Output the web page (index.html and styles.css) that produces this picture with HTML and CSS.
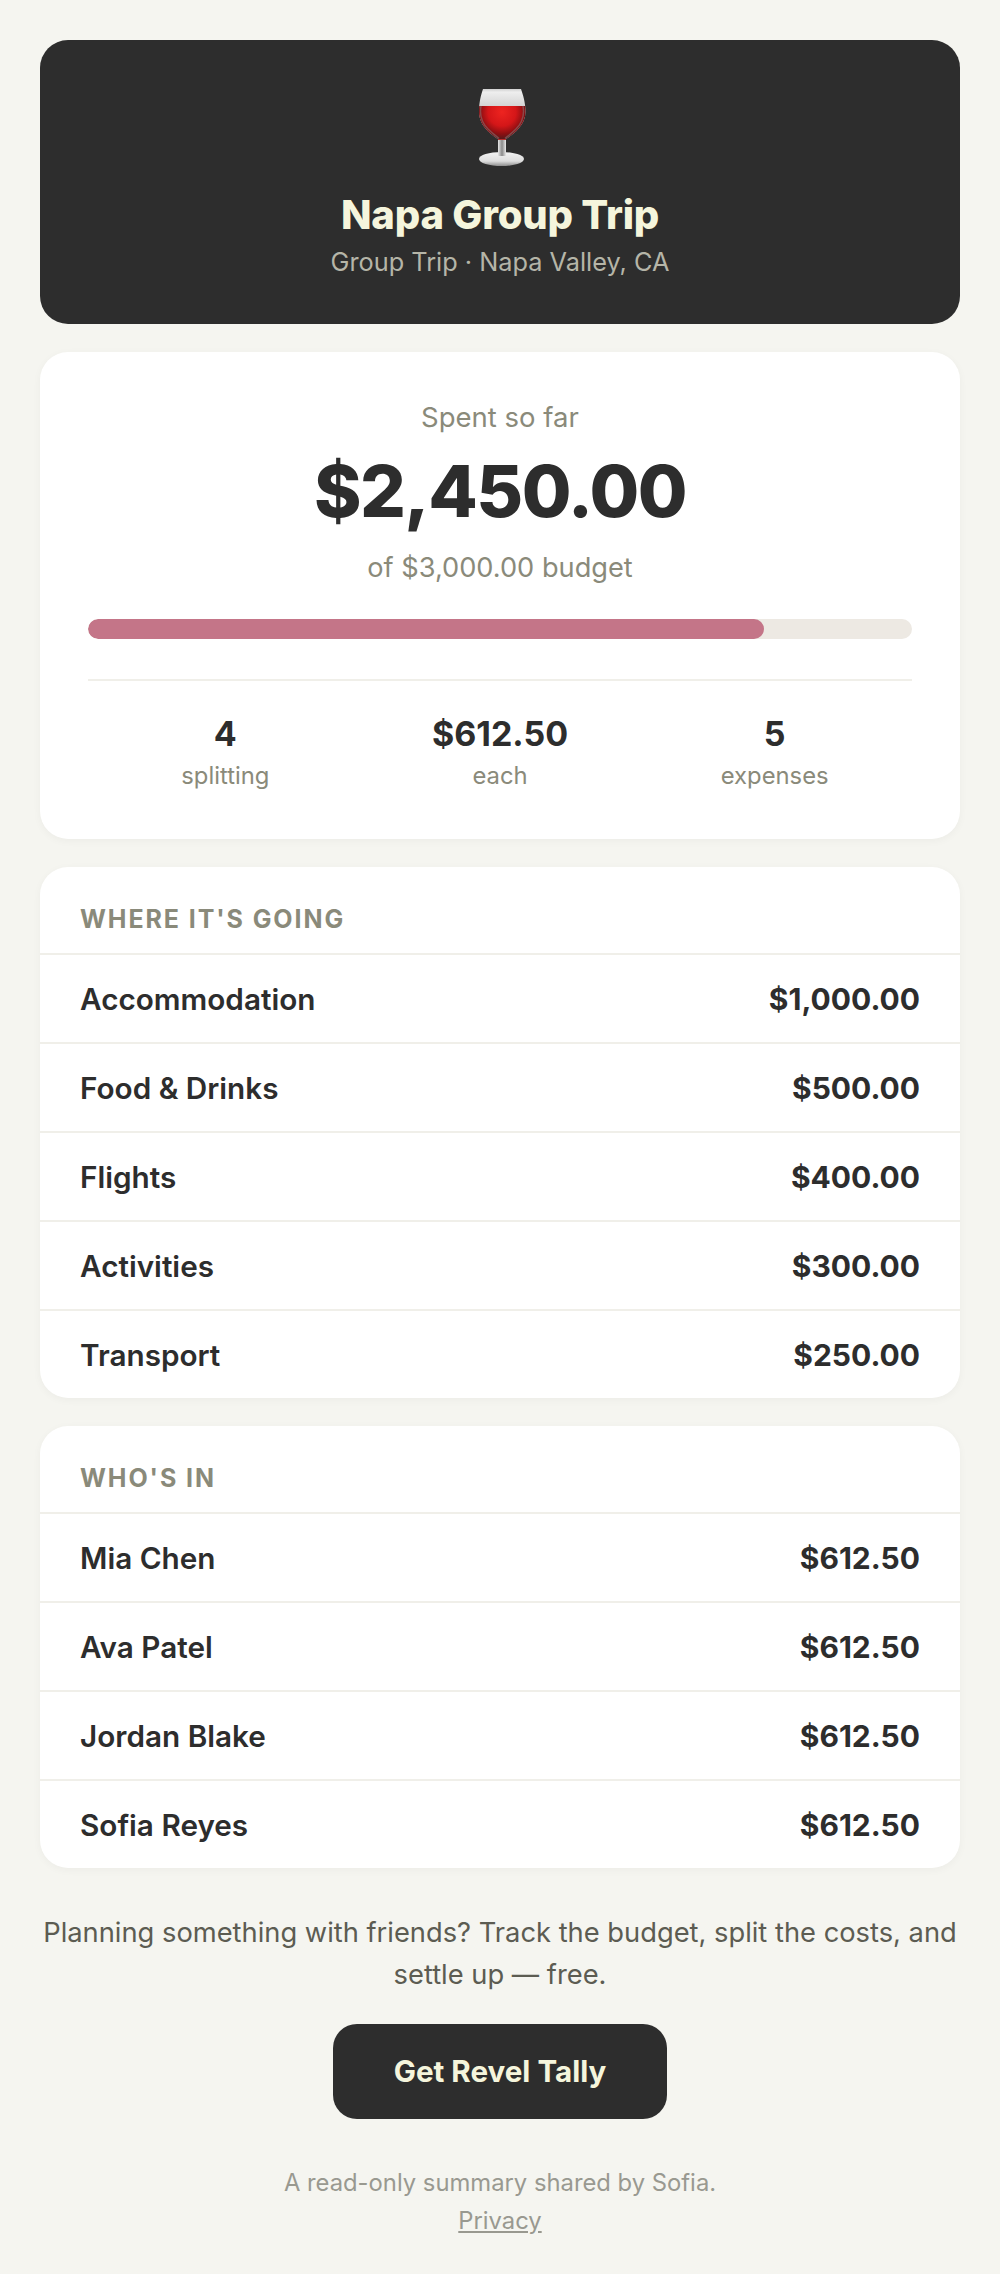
FILE: index.html
```html
<!DOCTYPE html>
<html>
    <head>
        <title>Napa Group Trip</title>
        <link rel="stylesheet" href="styles.css">
    </head>
    <body>
        <header class="hero">
            <svg class="glass" viewBox="0 0 48 80" width="48" height="80">
                <defs>
                    <radialGradient id="wine" gradientUnits="userSpaceOnUse" cx="24" cy="24" r="28">
                        <stop offset="0" stop-color="#ee2420"/>
                        <stop offset="0.5" stop-color="#d41618"/>
                        <stop offset="0.78" stop-color="#8c0f12"/>
                        <stop offset="1" stop-color="#4d1a1c"/>
                    </radialGradient>
                    <linearGradient id="bowl" x1="0" y1="0" x2="0" y2="1">
                        <stop offset="0" stop-color="#c8c8c8"/>
                        <stop offset="0.08" stop-color="#eeeeee"/>
                        <stop offset="0.35" stop-color="#d4d4d4"/>
                    </linearGradient>
                    <linearGradient id="stem" x1="0" y1="0" x2="1" y2="0">
                        <stop offset="0" stop-color="#e6e6e6"/>
                        <stop offset="0.5" stop-color="#8a8a8a"/>
                        <stop offset="1" stop-color="#e8e8e8"/>
                    </linearGradient>
                    <linearGradient id="foot" x1="0" y1="0" x2="0" y2="1">
                        <stop offset="0" stop-color="#f2f2f2"/>
                        <stop offset="0.65" stop-color="#dddddd"/>
                        <stop offset="1" stop-color="#8e8e8e"/>
                    </linearGradient>
                    <clipPath id="bowl-shape">
                        <path d="M5 1H43C45 7 47.5 14 47.5 24C47.5 38 34 47 28 51H20C14 47 1 38 1 24C1 14 3 7 5 1Z"/>
                    </clipPath>
                </defs>
                <ellipse cx="23.5" cy="71" rx="22.5" ry="7" fill="url(#foot)"/>
                <rect x="20" y="50" width="8" height="18" fill="url(#stem)"/>
                <rect x="20" y="50" width="8" height="2" fill="#b5302f"/>
                <g clip-path="url(#bowl-shape)">
                    <rect width="48" height="52" fill="url(#bowl)"/>
                    <rect y="18" width="48" height="34" fill="url(#wine)"/>
                </g>
                <path d="M3 18C1.5 26 3 34 10 41C14 45 18 48 21 50.5M45 18C46.5 26 45 34 38 41C34 45 30 48 27 50.5" fill="none" stroke="#8a7676" stroke-opacity="0.55" stroke-width="1.5"/>
            </svg>
            <h1>Napa Group Trip</h1>
            <p class="hero-sub">Group Trip · Napa Valley, CA</p>
        </header>

        <section class="card summary">
            <p class="spent-label">Spent so far</p>
            <p class="spent">$2,450.00</p>
            <p class="budget">of $3,000.00 budget</p>
            <div class="bar"><div class="bar-fill" style="width: 82%"></div></div>
            <div class="stats">
                <div class="stat"><strong>4</strong><span>splitting</span></div>
                <div class="stat"><strong>$612.50</strong><span>each</span></div>
                <div class="stat"><strong>5</strong><span>expenses</span></div>
            </div>
        </section>

        <section class="card">
            <h2>Where it's going</h2>
            <div class="row"><span>Accommodation</span><strong>$1,000.00</strong></div>
            <div class="row"><span>Food &amp; Drinks</span><strong>$500.00</strong></div>
            <div class="row"><span>Flights</span><strong>$400.00</strong></div>
            <div class="row"><span>Activities</span><strong>$300.00</strong></div>
            <div class="row"><span>Transport</span><strong>$250.00</strong></div>
        </section>

        <section class="card">
            <h2>Who's in</h2>
            <div class="row"><span>Mia Chen</span><strong>$612.50</strong></div>
            <div class="row"><span>Ava Patel</span><strong>$612.50</strong></div>
            <div class="row"><span>Jordan Blake</span><strong>$612.50</strong></div>
            <div class="row"><span>Sofia Reyes</span><strong>$612.50</strong></div>
        </section>

        <footer class="cta">
            <p class="pitch">Planning something with friends? Track the budget, split the costs, and settle up — free.</p>
            <a class="button" href="#">Get Revel Tally</a>
            <p class="note">A read-only summary shared by Sofia.<br><a href="#">Privacy</a></p>
        </footer>
    </body>
</html>
```

FILE: styles.css
```css
* {
    box-sizing: border-box;
}

body {
    margin: 0;
    padding: 40px;
    background: #f5f5f0;
    color: #2d2d2d;
    font-family: Inter, "Liberation Sans", sans-serif;
}

h1, h2, p {
    margin: 0;
}

.hero {
    display: flex;
    flex-direction: column;
    align-items: center;
    height: 284px;
    padding-top: 48px;
    background: #2d2d2d;
    border-radius: 28px;
}

.glass {
    display: block;
    margin-left: 4px;
}

.hero h1 {
    margin-top: 23px;
    color: #f5f5dc;
    font-size: 40px;
    line-height: 48px;
    font-weight: 800;
    letter-spacing: -0.2px;
}

.hero-sub {
    margin-top: 5px;
    color: #b5b5a8;
    font-size: 25.3px;
    line-height: 36px;
}

.card {
    margin-top: 28px;
    background: #fff;
    border-radius: 28px;
    box-shadow: 0 2px 8px rgba(0, 0, 0, 0.04);
    overflow: hidden;
}

.summary {
    padding: 48px 48px 47px;
    text-align: center;
}

.spent-label {
    color: #8a8a7a;
    font-size: 27.5px;
    line-height: 34px;
}

.spent {
    margin-top: 12px;
    font-size: 72px;
    line-height: 90px;
    font-weight: 800;
    letter-spacing: -1.5px;
}

.budget {
    margin-top: 14px;
    color: #8a8a7a;
    font-size: 27.2px;
    line-height: 36px;
}

.bar {
    height: 20px;
    margin-top: 33px;
    background: #ede9e3;
    border-radius: 10px;
    overflow: hidden;
}

.bar-fill {
    height: 100%;
    background: #c47588;
    border-radius: 10px;
}

.stats {
    display: grid;
    grid-template-columns: repeat(3, 1fr);
    margin-top: 40px;
    padding-top: 32px;
    border-top: 2px solid #f0efe9;
}

.stat strong {
    display: block;
    font-size: 34px;
    line-height: 42px;
    font-weight: 700;
}

.stat span {
    display: block;
    margin-top: 5px;
    color: #8a8a7a;
    font-size: 23.8px;
    line-height: 32px;
}

.card h2 {
    padding: 37px 40px 19px;
    color: #8a8a7a;
    font-size: 25px;
    line-height: 30px;
    font-weight: 700;
    letter-spacing: 1.9px;
    text-transform: uppercase;
}

.row {
    display: flex;
    justify-content: space-between;
    align-items: center;
    height: 89px;
    padding: 0 40px;
    border-top: 2px solid #f0efe9;
    font-size: 29.7px;
    font-weight: 600;
}

.row strong {
    font-size: 30px;
    font-weight: 700;
}

.cta {
    padding-top: 44px;
    text-align: center;
}

.pitch {
    color: #5c5c52;
    font-size: 27.3px;
    line-height: 42px;
}

.button {
    display: block;
    width: 334px;
    height: 95px;
    margin: 28px auto 0;
    background: #2d2d2d;
    border-radius: 24px;
    color: #f5f5dc;
    font-size: 29.6px;
    font-weight: 700;
    line-height: 95px;
    text-decoration: none;
}

.note {
    margin-top: 45px;
    color: #999990;
    font-size: 23.8px;
    line-height: 38px;
}

.note a {
    color: #999990;
}
```
